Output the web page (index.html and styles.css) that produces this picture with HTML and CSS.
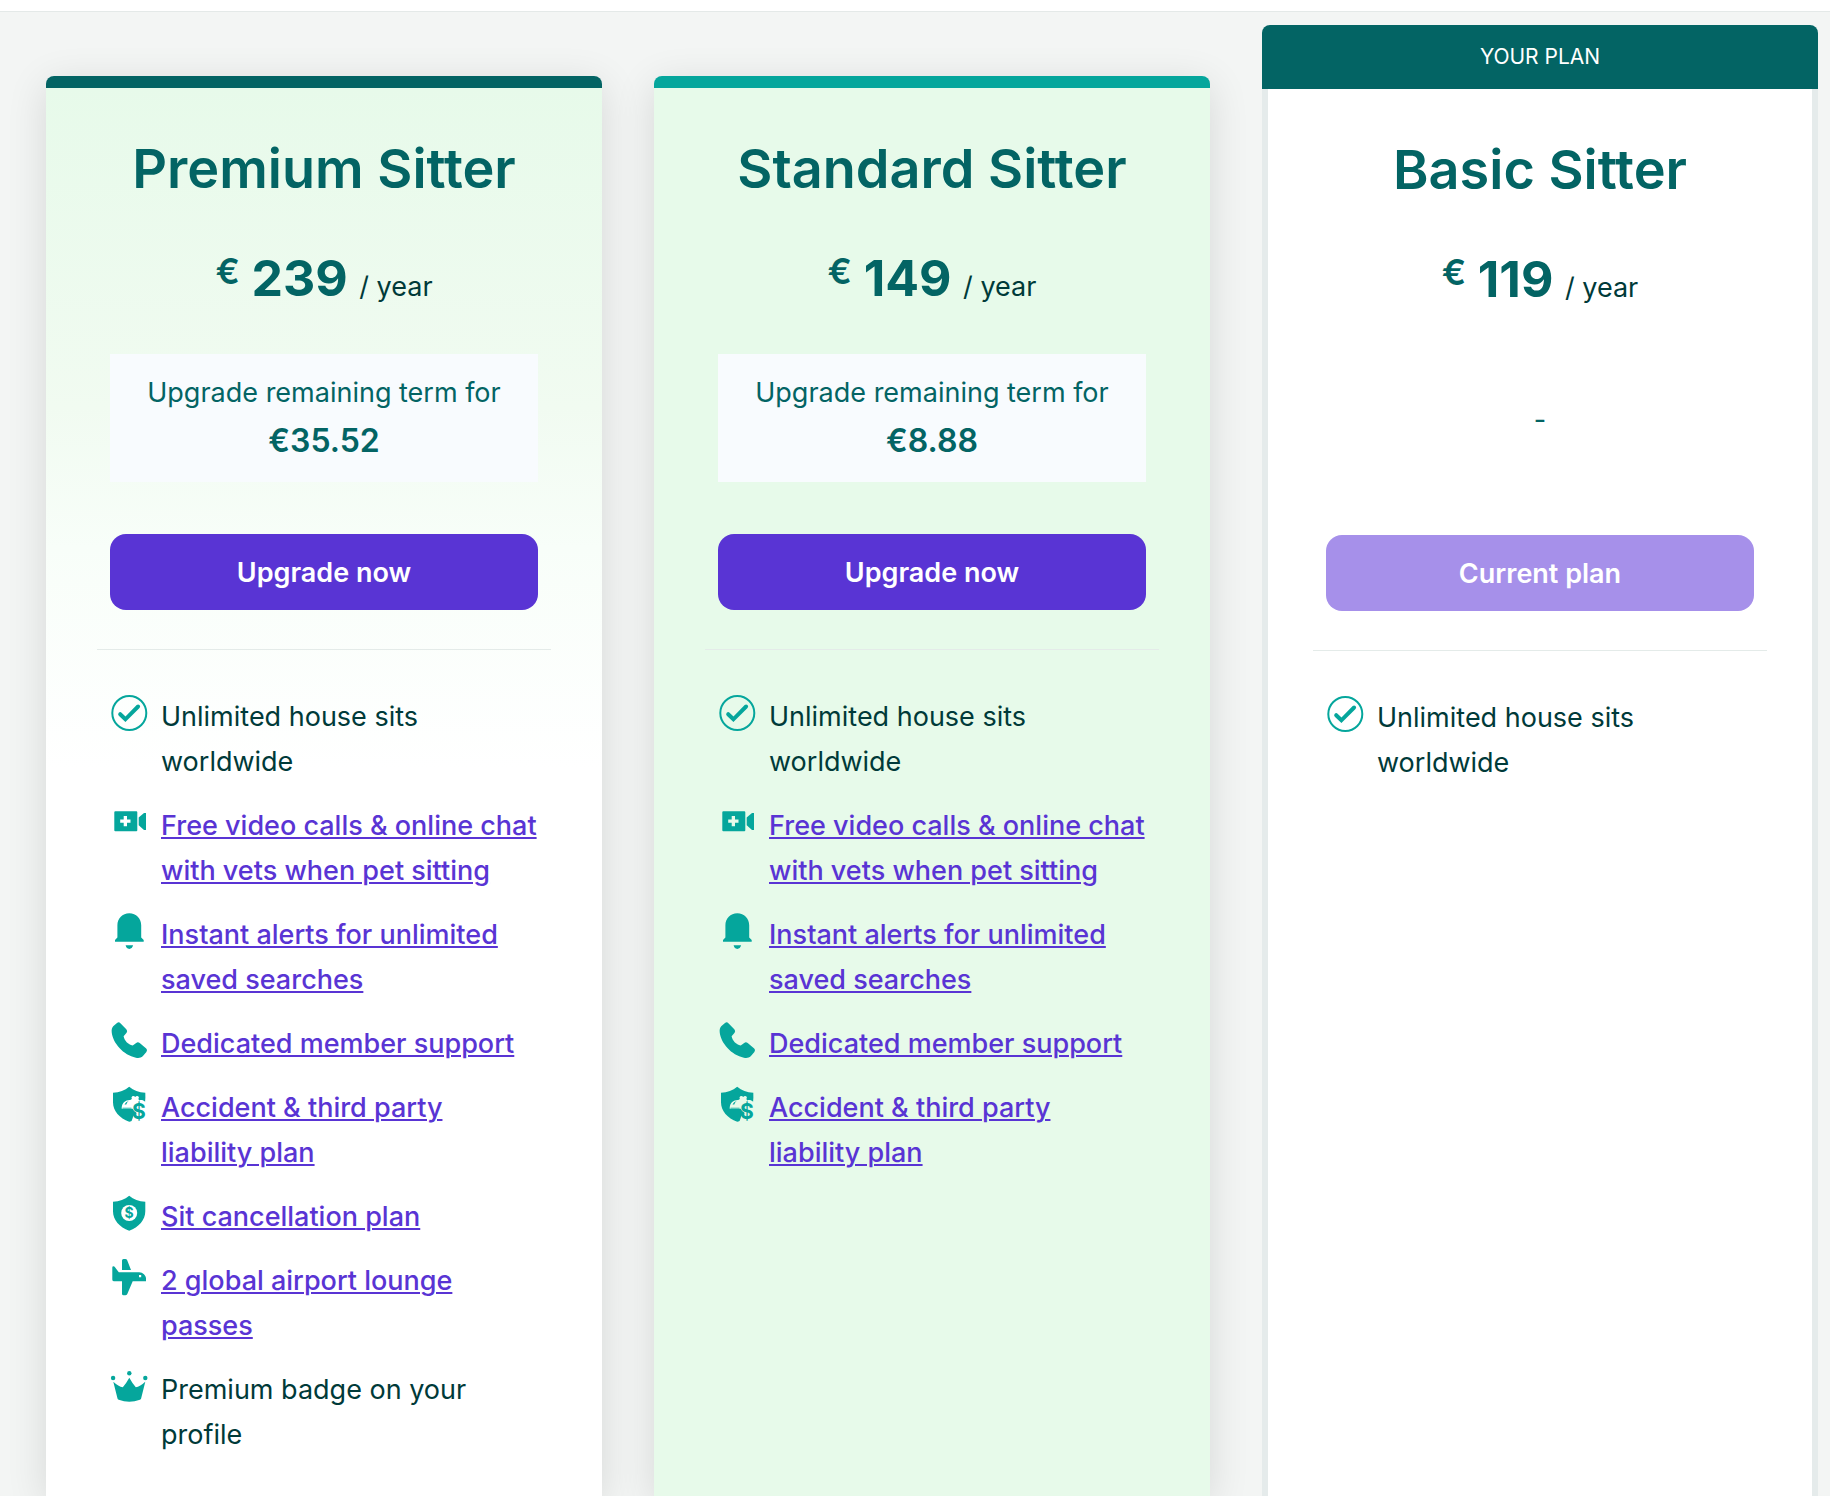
FILE: index.html
```html
<!DOCTYPE html>
<html lang="en">
<head>
    <meta charset="UTF-8">
    <meta name="viewport" content="width=device-width, initial-scale=1.0">
    <title>Membership plans</title>
    <link rel="stylesheet" href="styles.css">
</head>
<body>
    <!-- Icons shared by the plan cards -->
    <svg class="icon-defs" aria-hidden="true">
        <symbol id="icon-check" viewBox="0 0 38 38">
            <circle cx="19.3" cy="19" r="17" fill="none" stroke="currentColor" stroke-width="2"/>
            <path d="M10.2 20.2l5.2 5.1 12.7-12.8" fill="none" stroke="currentColor" stroke-width="4" stroke-linecap="round"/>
        </symbol>
        <symbol id="icon-video" viewBox="0 0 38 38">
            <path fill-rule="evenodd" d="M5.3 8.3h21q1 0 1 1v18q0 1-1 1h-21q-1 0-1-1v-18q0-1 1-1zM13.7 13v3.5h-3.5v3.3h3.5v3.5H17v-3.5h3.5v-3.3H17V13z"/>
            <path d="M28.7 14.5L34 10h2v17h-2l-5.3-4.7z"/>
        </symbol>
        <symbol id="icon-bell" viewBox="0 0 38 38">
            <path d="M7.4 13.3c0-7 5-12 11.9-12s11.9 5 11.9 12v12.2l2.5 2.6v1.6H5v-1.6l2.4-2.6z"/>
            <path d="M15.6 33.3h7.5c-.6 2.3-1.9 3.6-3.8 3.6s-3.2-1.3-3.7-3.6z"/>
        </symbol>
        <symbol id="icon-phone" viewBox="0 0 38 38">
            <path d="M3.200 5.300L7 2q1.800-1.500 3.400.2l5.900 6q1.600 1.700.3 3.500l-3 3.600c.8 4.400 4.500 8.300 9.100 9.300l3.500-2.700q1.800-1.300 3.500.2l6.500 5.500q1.600 1.500.2 3.300l-3.700 4.300c-1.700 1.700-4 2-6.800 1.500C13.500 34.300 2.700 22 1.700 11.300 1.500 8.600 1.900 6.700 3.200 5.300z"/>
        </symbol>
        <symbol id="icon-accident" viewBox="0 0 38 38">
            <path fill-rule="evenodd" d="M19.200 1.700c4.500 3.600 9.500 5.600 16.100 6 .2 3.200.1 6.200-.2 9-1.500-1.500-3.900-2-5.900-1.300l-.8-1.500q1.200-1.600-.2-2.700-1.700-.9-3 .7-1.300-1.600-3-.7-1.300 1.100-.3 2.700l-1.700 1.200c-4.700-.2-8 2.700-8.500 7.400v1.300h11q.8 2.300 3.600 3.700l.3 1.700q-3.700.5-3.800 3.600l-1.200 3.300q-1.200.6-2.400.6C9.500 33.200 3 25.700 3 17.200V7.700c6.600-.4 11.700-2.400 16.200-6z"/>
            <path d="M12.500 22.700h9v.8h-9zM14.500 19.500q1.300-3 4.200-3.600-1.800 1.300-2.400 3.600z"/>
            <text class="icon-dollar" x="29" y="34" font-size="21">$</text>
        </symbol>
        <symbol id="icon-cancel" viewBox="0 0 38 38">
            <path d="M19.200 1.700c4.500 3.600 9.500 5.600 16.100 6v9.500c0 8.500-6.500 16-16.100 19.500C9.500 33.200 3 25.700 3 17.200V7.700c6.600-.4 11.700-2.400 16.200-6z"/>
            <circle class="icon-cut" cx="19.200" cy="19" r="8"/>
            <text class="icon-dollar" x="19.200" y="24" font-size="14">$</text>
        </symbol>
        <symbol id="icon-plane" viewBox="0 0 38 38">
            <path d="M12 2.500Q12 1 13.500 1h1.700q1.500 0 2 1.300L21 12h-9z"/>
            <path fill-rule="evenodd" d="M2.300 9.500q0-1.200 1.100-1.200 1 0 1.600.9l3.800 5.100h20.400c3.600 0 6.800 3.100 6.800 6.200v2.800H22.700l-5.400 12.600q-.6 1.400-2 1.400H13.500q-1.500 0-1.500-1.500V23.300H4.200q-1.900 0-1.900-1.900zM29 17v2.200h2.200V17z"/>
        </symbol>
        <symbol id="icon-crown" viewBox="0 0 38 38">
            <circle cx="19.300" cy="6.300" r="2.200"/>
            <circle cx="3.100" cy="11" r="2.200"/>
            <circle cx="35.300" cy="11" r="2.200"/>
            <path d="M3.300 14.700q5.200 4.800 9.500 5.600 3-3.300 6.500-9.600 3.500 6.300 6.500 9.600 4.300-.8 9.500-5.600l-4.200 16.900q-.2.900-1.200 1.200-10.600 3.800-21.200 0-1-.3-1.200-1.200z"/>
        </symbol>
    </svg>

    <header class="top-bar"></header>

    <main class="plans">
        <!-- Premium -->
        <section class="plan plan-premium">
            <div class="plan-content">
                <h2 class="plan-title">Premium Sitter</h2>
                <p class="price"><sup class="currency">€</sup> <strong class="amount">239</strong> <span class="period">/ year</span></p>
                <div class="term term-box">
                    <span>Upgrade remaining term for</span>
                    <strong class="term-price">€35.52</strong>
                </div>
                <button class="plan-button" type="button">Upgrade now</button>
                <hr class="divider">
                <ul class="features">
                    <li><svg class="icon"><use href="#icon-check"/></svg><span>Unlimited house sits worldwide</span></li>
                    <li><svg class="icon"><use href="#icon-video"/></svg><a href="#">Free video calls &amp; online chat with vets when pet sitting</a></li>
                    <li><svg class="icon"><use href="#icon-bell"/></svg><a href="#">Instant alerts for unlimited saved searches</a></li>
                    <li><svg class="icon"><use href="#icon-phone"/></svg><a href="#">Dedicated member support</a></li>
                    <li><svg class="icon"><use href="#icon-accident"/></svg><a href="#">Accident &amp; third party liability plan</a></li>
                    <li><svg class="icon"><use href="#icon-cancel"/></svg><a href="#">Sit cancellation plan</a></li>
                    <li><svg class="icon"><use href="#icon-plane"/></svg><a href="#">2 global airport lounge passes</a></li>
                    <li><svg class="icon"><use href="#icon-crown"/></svg><span>Premium badge on your profile</span></li>
                </ul>
            </div>
        </section>

        <!-- Standard -->
        <section class="plan plan-standard">
            <div class="plan-content">
                <h2 class="plan-title">Standard Sitter</h2>
                <p class="price"><sup class="currency">€</sup> <strong class="amount">149</strong> <span class="period">/ year</span></p>
                <div class="term term-box">
                    <span>Upgrade remaining term for</span>
                    <strong class="term-price">€8.88</strong>
                </div>
                <button class="plan-button" type="button">Upgrade now</button>
                <hr class="divider">
                <ul class="features">
                    <li><svg class="icon"><use href="#icon-check"/></svg><span>Unlimited house sits worldwide</span></li>
                    <li><svg class="icon"><use href="#icon-video"/></svg><a href="#">Free video calls &amp; online chat with vets when pet sitting</a></li>
                    <li><svg class="icon"><use href="#icon-bell"/></svg><a href="#">Instant alerts for unlimited saved searches</a></li>
                    <li><svg class="icon"><use href="#icon-phone"/></svg><a href="#">Dedicated member support</a></li>
                    <li><svg class="icon"><use href="#icon-accident"/></svg><a href="#">Accident &amp; third party liability plan</a></li>
                </ul>
            </div>
        </section>

        <!-- Basic (current plan) -->
        <section class="plan plan-basic">
            <div class="plan-banner">YOUR PLAN</div>
            <div class="plan-content">
                <h2 class="plan-title">Basic Sitter</h2>
                <p class="price"><sup class="currency">€</sup> <strong class="amount">119</strong> <span class="period">/ year</span></p>
                <div class="term">-</div>
                <button class="plan-button" type="button" disabled>Current plan</button>
                <hr class="divider">
                <ul class="features">
                    <li><svg class="icon"><use href="#icon-check"/></svg><span>Unlimited house sits worldwide</span></li>
                </ul>
            </div>
        </section>
    </main>
</body>
</html>
```
FILE: styles.css
```css
* {
    box-sizing: border-box;
}

/* Body styles */
body {
    display: flex;
    flex-direction: column;
    min-height: 100vh;
    margin: 0;
    background: #f3f5f4;
    color: #003a39;
    font-family: Inter, "Open Sans", sans-serif;
    font-size: 27px;
    line-height: 45px;
}

.icon-defs {
    display: none;
}

.top-bar {
    height: 12px;
    background: #fff;
    border-bottom: 1px solid #e4e9e8;
}

/* Three plan columns */
.plans {
    flex: 1;
    display: grid;
    grid-template-columns: repeat(3, minmax(0, 1fr));
    gap: 52px;
    padding: 13px 12px 0 46px;
}

.plan {
    margin-top: 51px;
    border-top: 12px solid #036464;
    border-radius: 8px 8px 0 0;
    box-shadow: 0 8px 40px rgba(0, 0, 0, 0.12);
}

.plan-premium {
    background: linear-gradient(#e7faea, #f1fbf1 320px, #f8fef9 460px, #fff 680px);
}

.plan-standard {
    border-top-color: #05a69c;
    background: #e7faea;
}

.plan-basic {
    margin-top: 0;
    border-top: 0;
    background: #fff;
    box-shadow: none;
}

.plan-banner {
    height: 64px;
    border-radius: 8px 8px 0 0;
    background: #036464;
    color: #fff;
    font-size: 21px;
    line-height: 64px;
    text-align: center;
}

.plan-content {
    display: flex;
    flex-direction: column;
    padding: 49px 64px 28px;
}

.plan-basic .plan-content {
    min-height: calc(100% - 64px);
    padding: 49px 58px 28px;
    border: solid #e5ebeb;
    border-width: 0 6px;
}

.plan-title {
    margin: 0;
    color: #036464;
    font-size: 54px;
    font-weight: 600;
    line-height: 64px;
    text-align: center;
}

/* Price */
.price {
    height: 64px;
    margin: 45px 0 44px;
    line-height: 64px;
    text-align: center;
}

.currency {
    color: #036464;
    font-size: 36px;
    font-weight: 600;
    line-height: 1;
    vertical-align: 12px;
}

.amount {
    margin: 0 4px;
    color: #036464;
    font-size: 50px;
    font-weight: 700;
}

/* Upgrade price */
.term {
    display: flex;
    flex-direction: column;
    align-items: center;
    justify-content: center;
    height: 128px;
    color: #036464;
}

.term-box {
    background: #f8fbfe;
}

.term-price {
    font-size: 32px;
    font-weight: 600;
    line-height: 51px;
}

.plan-button {
    height: 76px;
    margin-top: 52px;
    border: 0;
    border-radius: 16px;
    background: #5934d4;
    color: #fff;
    font: inherit;
    font-weight: 600;
    cursor: pointer;
}

.plan-button:disabled {
    background: #a690ea;
    cursor: default;
}

.divider {
    width: auto;
    margin: 39px -13px 44px;
    border: 0;
    border-top: 1px solid #e4ebe9;
}

/* Feature list */
.features {
    display: flex;
    flex-direction: column;
    gap: 19px;
    margin: 0;
    padding: 0;
    list-style: none;
}

.features li {
    display: flex;
    gap: 13px;
}

.features a {
    color: #5934d4;
    font-weight: 500;
    text-decoration-thickness: 2px;
    text-underline-offset: 2px;
}

.icon {
    flex: none;
    width: 38px;
    height: 38px;
    color: #05a69c;
    fill: currentColor;
}

.icon-cut {
    fill: #fff;
}

.icon-dollar {
    font-weight: 700;
    text-anchor: middle;
}
```
